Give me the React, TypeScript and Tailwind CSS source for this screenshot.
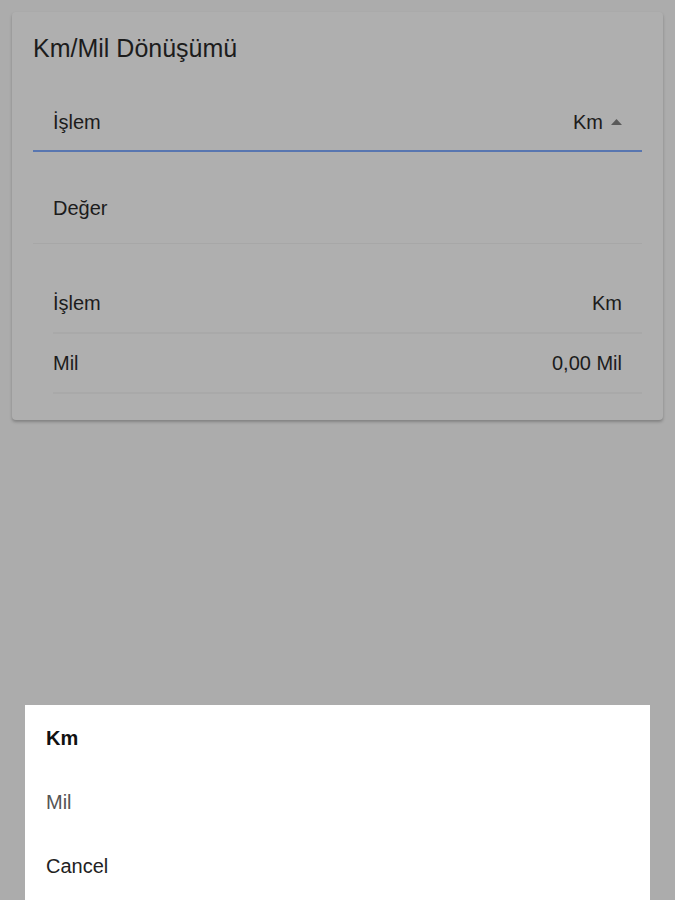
export default function App() {
  return (
    <div
      className="flex h-[900px] w-[675px] flex-col overflow-hidden bg-[#acacac] text-[#1c1c1c]"
      style={{ fontFamily: '"Liberation Sans", Arial, sans-serif' }}
    >
      <div className="mx-3 mt-3 rounded-sm bg-[#afafaf] px-[21px] pb-[26px] pt-[22px] shadow-[0_2px_3px_rgba(0,0,0,0.25)]">
        <h1 className="text-[25px] leading-[28px]">Km/Mil Dönüşümü</h1>

        <div className="mt-[32px] flex h-[58px] items-center justify-between border-b-2 border-[#5876b0] pl-5 pr-5">
          <span className="text-[20px]">İşlem</span>
          <span className="flex items-center gap-[8px] text-[20px]">
            Km
            <svg width="11" height="6" viewBox="0 0 11 6" className="text-[#5a5a5a]">
              <path d="M0 6 L5.5 0 L11 6 Z" fill="currentColor" />
            </svg>
          </span>
        </div>

        <div className="mt-[20px] flex h-[72px] items-center border-b border-[#a7a7a7] pl-5">
          <span className="text-[20px]">Değer</span>
        </div>

        <div className="mt-[30px] pl-5">
          <div className="flex h-[60px] items-center justify-between border-b-2 border-[#a9a9a9] pr-5">
            <span className="text-[20px]">İşlem</span>
            <span className="text-[20px]">Km</span>
          </div>
          <div className="flex h-[60px] items-center justify-between border-b-2 border-[#a9a9a9] pr-5">
            <span className="text-[20px]">Mil</span>
            <span className="text-[20px]">0,00 Mil</span>
          </div>
        </div>
      </div>

      <div className="mt-auto mx-[25px] flex h-[195px] flex-col bg-white pl-[21px] pt-[1px]">
        <div className="flex h-[64px] items-center text-[20px] font-bold text-[#111]">Km</div>
        <div className="flex h-[64px] items-center text-[20px] text-[#555]">Mil</div>
        <div className="flex h-[64px] items-center text-[20px] text-[#222]">Cancel</div>
      </div>
    </div>
  );
}
